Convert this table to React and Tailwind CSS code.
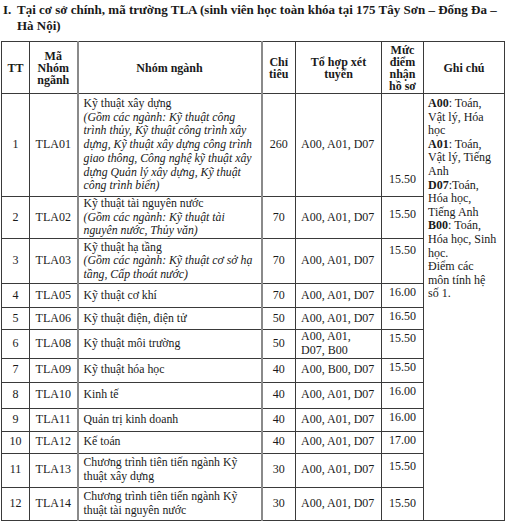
const rows = [
  {
    tt: "1",
    ma: "TLA01",
    name: ["Kỹ  thuật xây dựng"],
    italic: [
      "(Gồm các ngành: Kỹ thuật công",
      "trình thủy, Kỹ thuật công trình xây",
      "dựng, Kỹ thuật xây dựng công trình",
      "giao thông, Công nghệ kỹ thuật xây",
      "dựng Quản lý xây dựng, Kỹ thuật",
      "công trình biển)",
    ],
    ct: "260",
    th: ["A00, A01, D07"],
    diem: "15.50",
    h: "h-[103px]",
    diemCls: "align-bottom pb-[9px]",
  },
  {
    tt: "2",
    ma: "TLA02",
    name: ["Kỹ thuật tài nguyên nước"],
    italic: ["(Gồm các ngành: Kỹ thuật tài", "nguyên nước, Thủy văn)"],
    ct: "70",
    th: ["A00, A01, D07"],
    diem: "15.50",
    h: "h-[41px]",
    diemCls: "align-middle pb-[6px]",
  },
  {
    tt: "3",
    ma: "TLA03",
    name: ["Kỹ thuật hạ tầng"],
    italic: ["(Gồm các ngành: Kỹ thuật cơ sở hạ", "tầng, Cấp thoát nước)"],
    ct: "70",
    th: ["A00, A01, D07"],
    diem: "15.50",
    h: "h-[45px]",
    diemCls: "align-top pt-[5px]",
  },
  { tt: "4", ma: "TLA05", name: ["Kỹ thuật cơ khí"], ct: "70", th: ["A00, A01, D07"], diem: "16.00", h: "h-[24px]" },
  { tt: "5", ma: "TLA06", name: ["Kỹ thuật điện, điện tử"], ct: "50", th: ["A00, A01, D07"], diem: "16.50", h: "h-[22px]" },
  { tt: "6", ma: "TLA08", name: ["Kỹ thuật môi trường"], ct: "50", th: ["A00, A01,", "D07, B00"], diem: "15.50", h: "h-[25px]" },
  { tt: "7", ma: "TLA09", name: ["Kỹ thuật hóa học"], ct: "40", th: ["A00, B00, D07"], diem: "15.50", h: "h-[24px]" },
  { tt: "8", ma: "TLA10", name: ["Kinh tế"], ct: "40", th: ["A00, A01, D07"], diem: "16.00", h: "h-[26px]" },
  { tt: "9", ma: "TLA11", name: ["Quản trị kinh doanh"], ct: "40", th: ["A00, A01, D07"], diem: "16.00", h: "h-[23px]" },
  { tt: "10", ma: "TLA12", name: ["Kế toán"], ct: "40", th: ["A00, A01, D07"], diem: "17.00", h: "h-[22px]" },
  {
    tt: "11",
    ma: "TLA13",
    name: ["Chương trình tiên tiến ngành Kỹ", "thuật xây dựng"],
    ct: "30",
    th: ["A00, A01, D07"],
    diem: "15.50",
    h: "h-[34px]",
    diemCls: "align-middle pb-[6px]",
  },
  {
    tt: "12",
    ma: "TLA14",
    name: ["Chương trình tiên tiến ngành Kỹ", "thuật tài nguyên nước"],
    ct: "30",
    th: ["A00, A01, D07"],
    diem: "15.50",
    h: "h-[33px]",
    diemCls: "align-middle",
  },
];

const notes = [
  [<b key="a">A00</b>, ": Toán,"],
  ["Vật lý, Hóa"],
  ["học"],
  [<b key="b">A01</b>, ": Toán,"],
  ["Vật lý, Tiếng"],
  ["Anh"],
  [<b key="c">D07</b>, ":Toán,"],
  ["Hóa học,"],
  ["Tiếng Anh"],
  [<b key="d">B00</b>, ": Toán,"],
  ["Hóa học, Sinh"],
  ["học."],
  ["Điểm các"],
  ["môn tính hệ"],
  ["số 1."],
];

const cell = "border border-[#3a3a3a] p-0";

export default function App() {
  return (
    <div
      className="w-[515px] h-[524px] bg-white text-[#1a1a1a] overflow-hidden"
      style={{ fontFamily: '"Liberation Serif", "Times New Roman", serif' }}
    >
      <div className="flex pl-[3px] pt-[2px] text-[13px] leading-[16px] font-bold">
        <span className="w-[14px] shrink-0">I.</span>
        <span className="w-[490px]">
          Tại cơ sở chính, mã trường TLA (sinh viên học toàn khóa tại 175 Tây Sơn – Đống Đa –
          Hà Nội)
        </span>
      </div>

      <table className="table-fixed border-collapse w-[503px] ml-[1px] mt-[7px] text-[12px] leading-[13.7px]">
        <colgroup>
          <col className="w-[28px]" />
          <col className="w-[48px]" />
          <col className="w-[184px]" />
          <col className="w-[34px]" />
          <col className="w-[86px]" />
          <col className="w-[42px]" />
          <col className="w-[81px]" />
        </colgroup>
        <thead>
          <tr className="h-[52px] font-bold leading-[12px] text-center">
            <th className={cell}>TT</th>
            <th className={cell}>
              Mã<br />Nhóm<br />ngãnh
            </th>
            <th className={`${cell} border-l-2 border-l-[#8a8a8a]`}>Nhóm ngành</th>
            <th className={`${cell} border-l-2 border-l-[#8a8a8a]`}>
              Chỉ<br />tiêu
            </th>
            <th className={cell}>
              Tổ hợp xét<br />tuyển
            </th>
            <th className={cell}>
              Mức<br />điểm<br />nhận<br />hồ sơ
            </th>
            <th className={cell}>Ghi chú</th>
          </tr>
        </thead>
        <tbody>
          {rows.map((r, i) => (
            <tr key={r.tt} className={r.h}>
              <td className={`${cell} text-center align-middle`}>{r.tt}</td>
              <td className={`${cell} text-center align-middle`}>{r.ma}</td>
              <td className={`${cell} border-l-2 border-l-[#8a8a8a] align-middle pl-[5px] whitespace-nowrap text-[11.8px]`}>
                {r.name.map((l) => (
                  <div key={l}>{l}</div>
                ))}
                {r.italic &&
                  r.italic.map((l) => (
                    <div key={l} className="italic">
                      {l}
                    </div>
                  ))}
              </td>
              <td className={`${cell} border-l-2 border-l-[#8a8a8a] text-center align-middle`}>{r.ct}</td>
              <td className={`${cell} align-middle pl-[5px] whitespace-nowrap`}>
                {r.th.map((l) => (
                  <div key={l}>{l}</div>
                ))}
              </td>
              <td className={`${cell} text-center ${r.diemCls || "align-top pt-[2px]"}`}>{r.diem}</td>
              {i === 0 && (
                <td rowSpan={12} className={`${cell} align-top pl-[4px] pt-[3px] leading-[13.6px] whitespace-nowrap`}>
                  {notes.map((n, k) => (
                    <div key={k}>{n}</div>
                  ))}
                </td>
              )}
            </tr>
          ))}
        </tbody>
      </table>
    </div>
  );
}
